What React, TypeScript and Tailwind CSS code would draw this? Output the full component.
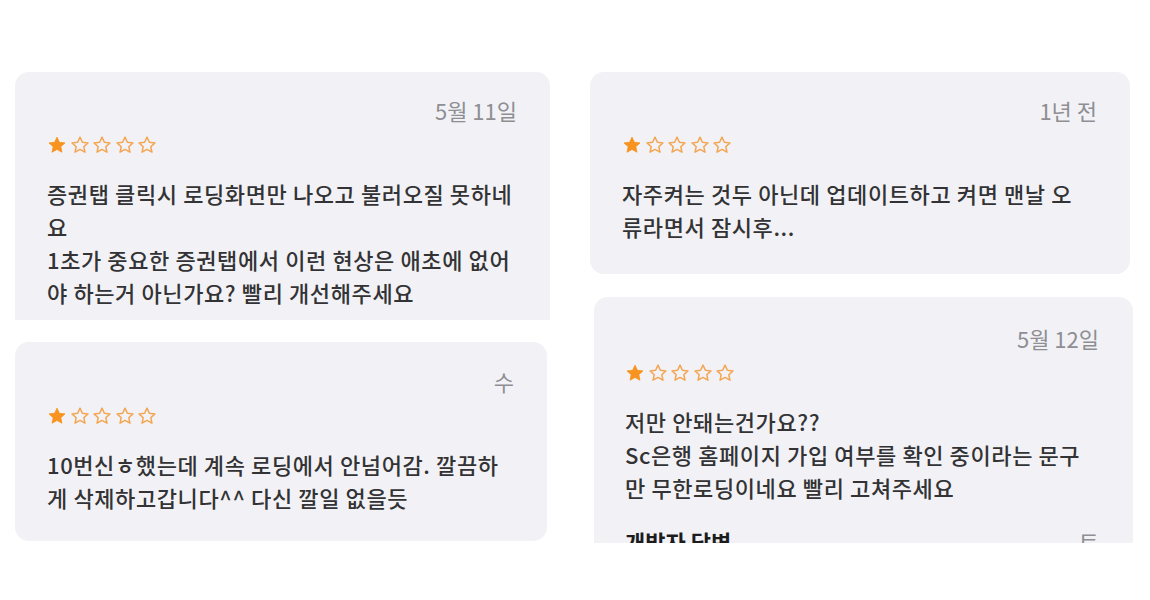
import React from "react";

type Review = {
  date: string;
  lines: string[];
  reply?: boolean;
};

function StarIcon({ filled }: { filled: boolean }) {
  return (
    <svg width="20" height="20" viewBox="0 0 24 24" className="shrink-0">
      <path
        d="M12 2.6l2.85 6.15 6.7.75-5 4.55 1.4 6.6L12 17.3l-5.95 3.35 1.4-6.6-5-4.55 6.7-.75z"
        fill={filled ? "#f7931e" : "none"}
        stroke={filled ? "#f7931e" : "#f3a552"}
        strokeWidth={filled ? 1 : 1.8}
        strokeLinejoin="round"
      />
    </svg>
  );
}

function Stars() {
  return (
    <div className="flex h-[36px] items-center gap-[2.5px]">
      <StarIcon filled />
      <StarIcon filled={false} />
      <StarIcon filled={false} />
      <StarIcon filled={false} />
      <StarIcon filled={false} />
    </div>
  );
}

function ReviewCard({
  review,
  className,
}: {
  review: Review;
  className: string;
}) {
  return (
    <div className={`overflow-hidden bg-[#f2f2f6] pt-[22px] pl-8 pr-[33px] ${className}`}>
      <div className="flex h-[33px] items-center justify-end text-[22px] leading-[33px] text-[#8e8e93]">
        {review.date}
      </div>
      <Stars />
      <div className="mt-[14px] text-[22px] leading-[33px] font-medium tracking-[0.6px] text-[#333335]">
        {review.lines.map((line, i) => (
          <div key={i} className="whitespace-nowrap">
            {line}
          </div>
        ))}
      </div>
      {review.reply && (
        <div className="mt-[21px] flex items-center justify-between text-[22px] leading-[33px]">
          <span className="font-bold text-[#1c1c1e]">개발자 답변</span>
          <span className="text-[#8e8e93]">토</span>
        </div>
      )}
    </div>
  );
}

const left: Review[] = [
  {
    date: "5월 11일",
    lines: [
      "증권탭 클릭시 로딩화면만 나오고 불러오질 못하네",
      "요",
      "1초가 중요한 증권탭에서 이런 현상은 애초에 없어",
      "야 하는거 아닌가요? 빨리 개선해주세요",
    ],
  },
  {
    date: "수",
    lines: [
      "10번신ㅎ했는데 계속 로딩에서 안넘어감. 깔끔하",
      "게 삭제하고갑니다^^ 다신 깔일 없을듯",
    ],
  },
];

const right: Review[] = [
  {
    date: "1년 전",
    lines: [
      "자주켜는 것두 아닌데 업데이트하고 켜면 맨날 오",
      "류라면서 잠시후...",
    ],
  },
  {
    date: "5월 12일",
    lines: [
      "저만 안돼는건가요??",
      "Sc은행 홈페이지 가입 여부를 확인 중이라는 문구",
      "만 무한로딩이네요 빨리 고쳐주세요",
    ],
    reply: true,
  },
];

export default function App() {
  return (
    <div
      className="h-[600px] w-[1150px] bg-white pt-[72px] pl-[15px]"
      style={{ fontFamily: '"Noto Sans CJK KR", "Noto Sans", sans-serif' }}
    >
      <div className="flex gap-[40px]">
        <div className="flex w-[535px] flex-col gap-[22px]">
          <ReviewCard review={left[0]} className="h-[248px] rounded-t-[14px]" />
          <ReviewCard review={left[1]} className="mr-[3px] h-[199px] rounded-[14px] pt-[23px] pr-[32px]" />
        </div>
        <div className="flex w-[543px] flex-col gap-[23px]">
          <ReviewCard review={right[0]} className="mr-[3px] h-[202px] rounded-[14px]" />
          <ReviewCard review={right[1]} className="ml-[4px] h-[246px] rounded-t-[14px] pt-[25px] pl-[31px] pr-[34px]" />
        </div>
      </div>
    </div>
  );
}
